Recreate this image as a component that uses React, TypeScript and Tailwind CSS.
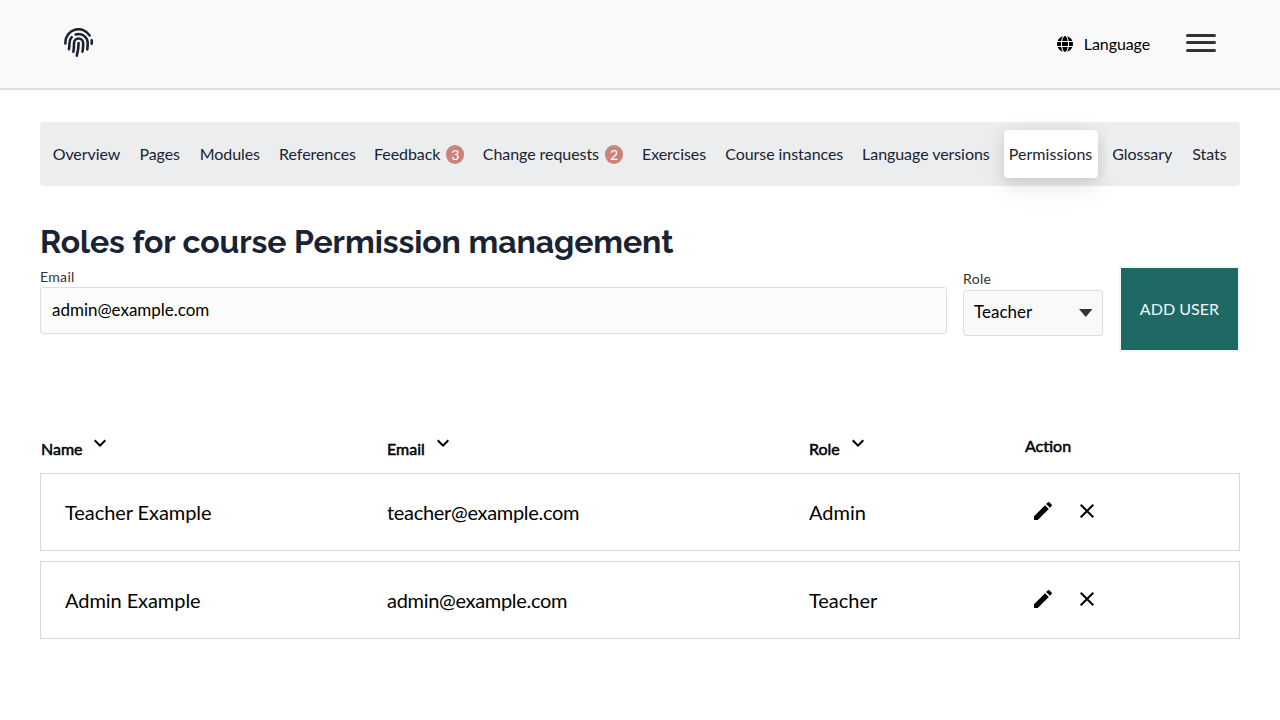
import React from "react";
import { MdExpandMore, MdEdit, MdClose } from "react-icons/md";
import { FaGlobe } from "react-icons/fa6";

type Tab = { label: string; width: string; count?: number; active?: boolean };

const tabs: Tab[] = [
  { label: "Overview", width: "w-[77px]" },
  { label: "Pages", width: "w-[51px]" },
  { label: "Modules", width: "w-[71px]" },
  { label: "References", width: "w-[86px]" },
  { label: "Feedback", width: "w-[99px]", count: 3 },
  { label: "Change requests", width: "w-[150px]", count: 2 },
  { label: "Exercises", width: "w-[74px]" },
  { label: "Course instances", width: "w-[128px]" },
  { label: "Language versions", width: "w-[137px]" },
  { label: "Permissions", width: "w-[94px]", active: true },
  { label: "Glossary", width: "w-[71px]" },
  { label: "Stats", width: "w-[45px]" },
];

const people = [
  { name: "Teacher Example", email: "teacher@example.com", role: "Admin" },
  { name: "Admin Example", email: "admin@example.com", role: "Teacher" },
];

function Logo() {
  return (
    <svg
      className="mt-7 size-[30px]"
      viewBox="0 0 30 30"
      fill="none"
      stroke="#1a2333"
      strokeWidth="2.6"
      strokeLinecap="round"
    >
      <path d="M1.4 15.4V14.4A13.1 13.1 0 0 1 25.6 7.4" />
      <path d="M27.7 12.2Q28 14.2 27.6 15.8" />
      <path d="M11.7 6.5Q13 6 14.6 6C19.8 6 23.6 10 23.7 14.6Q23.8 18 23.3 21.4" />
      <path d="M7.7 9.2C6 11 5.5 13 5.5 15Q5.5 18 4.9 21.2" />
      <path d="M9.4 23.7Q10 20 10 15.5C10 12.6 12 10.5 14.6 10.5S19.2 12.6 19.2 15.5Q19.2 20 18.5 23.6" />
      <path d="M14.6 15.1Q14.6 21 12.8 27.7" />
    </svg>
  );
}

function SortHeading({ label, gap = "ml-1.5" }: { label: string; gap?: string }) {
  return (
    <div className="flex items-start">
      <span className="pt-1.5 leading-6 [-webkit-text-stroke:0.5px_black]">{label}</span>
      <MdExpandMore className={`${gap} size-6`} />
    </div>
  );
}

export default function App() {
  return (
    <div className="min-h-screen bg-white font-['Lato',sans-serif] text-base text-black">
      <header className="flex h-[90px] items-start border-b-2 border-[#dedede] bg-[#f9f9f9] px-16">
        <Logo />
        <div className="ml-auto mt-8 flex items-center">
          <FaGlobe className="size-4" />
          <span className="ml-[11px] leading-6 tracking-[-0.1px]">Language</span>
        </div>
        <div className="ml-9 mt-[34px] flex flex-col">
          <span className="h-[3px] w-[30px] rounded-sm bg-[#333]" />
          <span className="mt-1 h-[3px] w-[30px] rounded-sm bg-[#333]" />
          <span className="mt-[5px] h-[3px] w-[30px] rounded-sm bg-[#333]" />
        </div>
      </header>

      <main className="px-10 pt-8">
        <nav className="flex h-16 items-center justify-between rounded bg-[#ebedee] p-2 tracking-[-0.06px] text-[#1a2333]">
          {tabs.map((tab) => (
            <a
              key={tab.label}
              className={`flex h-12 shrink-0 items-center justify-center rounded whitespace-nowrap ${tab.width} ${
                tab.active
                  ? "bg-white tracking-[0.05px] shadow-[0_8px_30px_rgba(0,0,0,0.08),0_4px_14px_rgba(0,0,0,0.1)]"
                  : "bg-[#ebedee]"
              }`}
            >
              {tab.label}
              {tab.count !== undefined && (
                <span className="ml-1.5 flex h-[19px] w-[18px] items-center justify-center rounded-full bg-[#c98579] pt-px text-sm text-white">
                  {tab.count}
                </span>
              )}
            </a>
          ))}
        </nav>

        <h1 className="mt-9 font-['Raleway','Lato',sans-serif] text-[32px] leading-10 font-bold tracking-[-0.08px] text-[#1a2333]">
          Roles for course Permission management
        </h1>

        <form className="flex h-[90px] items-start pt-1">
          <label className="flex w-[907px] flex-col text-sm leading-[21px] tracking-[0.35px] text-[#333]">
            Email
            <input
              className="h-[47px] rounded-[3px] border border-[#dedede] bg-[#fcfcfc] px-[11px] pb-0.5 text-[17px] tracking-[-0.02px] text-black"
              defaultValue="admin@example.com"
            />
          </label>
          <div className="ml-4 flex w-[140px] flex-col pt-0.5 text-sm leading-[21px] tracking-[0.35px] text-[#333]">
            Role
            <div className="mt-px flex h-[46px] items-center justify-between rounded-[3px] border border-[#dedede] bg-[#f9f9f9] pr-[9px] pl-2.5 text-[17px] tracking-normal text-black">
              <span className="pb-[3px]">Teacher</span>
              <svg className="h-2 w-3.5" viewBox="0 0 14 8" fill="#333">
                <path d="M0 0h13.5L6.75 8z" />
              </svg>
            </div>
          </div>
          <button
            type="button"
            className="ml-4 h-[86px] w-[121px] border-2 border-[#f5f6f7] bg-[#1f6964] text-base tracking-[0.05px] text-[#f5f6f7]"
          >
            ADD USER
          </button>
        </form>

        <section className="pt-[79px]">
          <div className="grid h-[42px] grid-cols-[346px_422px_216px_1fr] pl-px">
            <SortHeading label="Name" gap="ml-[5px]" />
            <SortHeading label="Email" />
            <SortHeading label="Role" />
            <span className="pt-[3px] leading-6 [-webkit-text-stroke:0.5px_black]">Action</span>
          </div>
          <div className="flex flex-col gap-2.5 text-xl">
            {people.map((p) => (
              <div
                key={p.email}
                className="grid h-[78px] grid-cols-[322px_422px_216px_1fr] items-center border border-[#d8d8d8] pl-6"
              >
                <span className="tracking-[-0.07px]">{p.name}</span>
                <span className="tracking-[-0.31px]">{p.email}</span>
                <span className="tracking-[-0.03px]">{p.role}</span>
                <span className="flex gap-5 pb-0.5 pl-1.5">
                  <MdEdit className="size-6" />
                  <MdClose className="size-6" />
                </span>
              </div>
            ))}
          </div>
        </section>
      </main>
    </div>
  );
}
